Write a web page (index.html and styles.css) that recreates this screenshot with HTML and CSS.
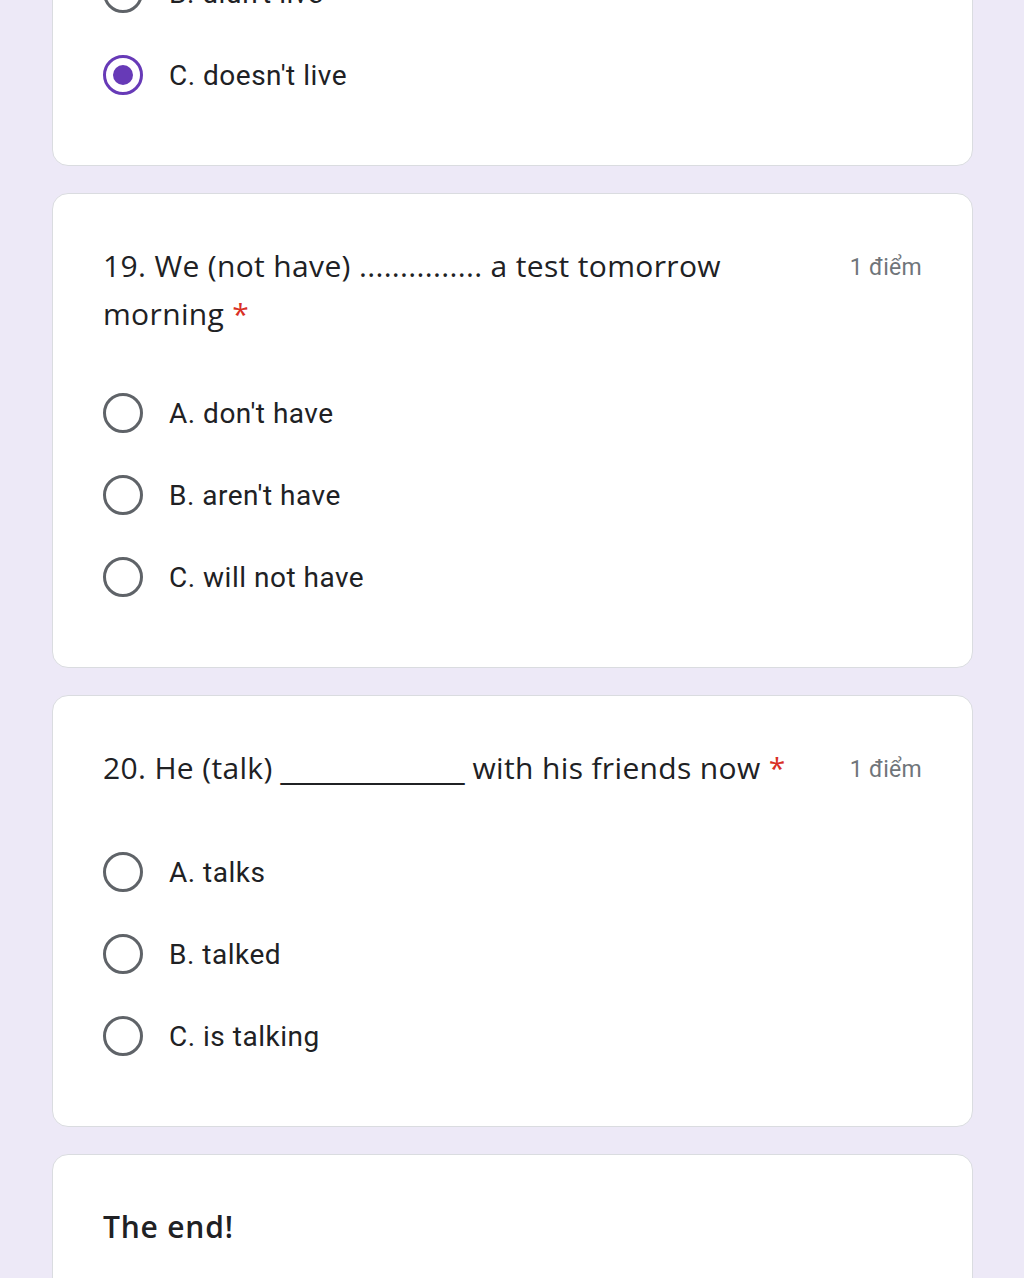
FILE: index.html
```html
<!DOCTYPE html>
<html lang="vi">
<head>
    <meta charset="utf-8" />
    <title>Bài kiểm tra</title>
    <link rel="stylesheet" href="styles.css">
</head>
<body>
    <div class="formWrap">
        <div class="qCard firstCard">
            <div class="optRow">
                <span class="radio"></span>
                <span class="optText">B. didn't live</span>
            </div>
            <div class="optRow">
                <span class="radio checked"></span>
                <span class="optText">C. doesn't live</span>
            </div>
        </div>

        <div class="qCard">
            <div class="qHead">
                <div class="qTitle">19. We (not have) ............... a test tomorrow morning <span class="req">*</span></div>
                <div class="qPoint">1 điểm</div>
            </div>
            <div class="optList">
                <div class="optRow"><span class="radio"></span><span class="optText">A. don't have</span></div>
                <div class="optRow"><span class="radio"></span><span class="optText">B. aren't have</span></div>
                <div class="optRow"><span class="radio"></span><span class="optText">C. will not have</span></div>
            </div>
        </div>

        <div class="qCard">
            <div class="qHead">
                <div class="qTitle">20. He (talk) <span class="blank">___________</span> with his friends now <span class="req">*</span></div>
                <div class="qPoint">1 điểm</div>
            </div>
            <div class="optList oneLine">
                <div class="optRow"><span class="radio"></span><span class="optText">A. talks</span></div>
                <div class="optRow"><span class="radio"></span><span class="optText">B. talked</span></div>
                <div class="optRow"><span class="radio"></span><span class="optText">C. is talking</span></div>
            </div>
        </div>

        <div class="qCard endCard">
            <div class="endTitle">The end!</div>
        </div>
    </div>
</body>
</html>
```

FILE: styles.css
```css
html{background:#ede9f7;}
body{margin:0;font-family:Roboto,"Noto Sans",sans-serif;color:#202124;}
.formWrap{padding:0 51px 0 52px;display:flex;flex-direction:column;gap:27px;margin-top:-49px;}
.qCard{background:#fff;border:1px solid #dadce0;border-radius:16px;padding:48px 50px 49px 50px;}
.firstCard{padding-top:0;border-top-left-radius:0;border-top-right-radius:0;}
.qHead{display:flex;align-items:flex-start;}
.qTitle{flex:1;font-family:"Open Sans",Roboto,sans-serif;font-size:30px;line-height:48px;letter-spacing:0.35px;padding-right:40px;}
.blank{font-family:"Liberation Sans",Arial,sans-serif;letter-spacing:0;}
.req{color:#d93025;}
.qPoint{font-size:23px;line-height:48px;padding-top:2px;color:#70757a;white-space:nowrap;letter-spacing:0.3px;}
.optList{margin-top:34px;}
.optList.oneLine{margin-top:37px;}
.optRow{display:flex;align-items:center;height:82px;}
.radio{width:34px;height:34px;border:3px solid #5f6368;border-radius:50%;margin-right:26px;flex:none;display:flex;align-items:center;justify-content:center;}
.radio.checked{border-color:#673ab7;}
.radio.checked::after{content:"";width:20px;height:20px;border-radius:50%;background:#673ab7;}
.optText{font-size:28px;letter-spacing:0.5px;}
.endCard{padding-bottom:60px;}
.endTitle{font-family:"Open Sans",Roboto,sans-serif;font-size:30px;line-height:48px;font-weight:600;letter-spacing:0.8px;}
```
